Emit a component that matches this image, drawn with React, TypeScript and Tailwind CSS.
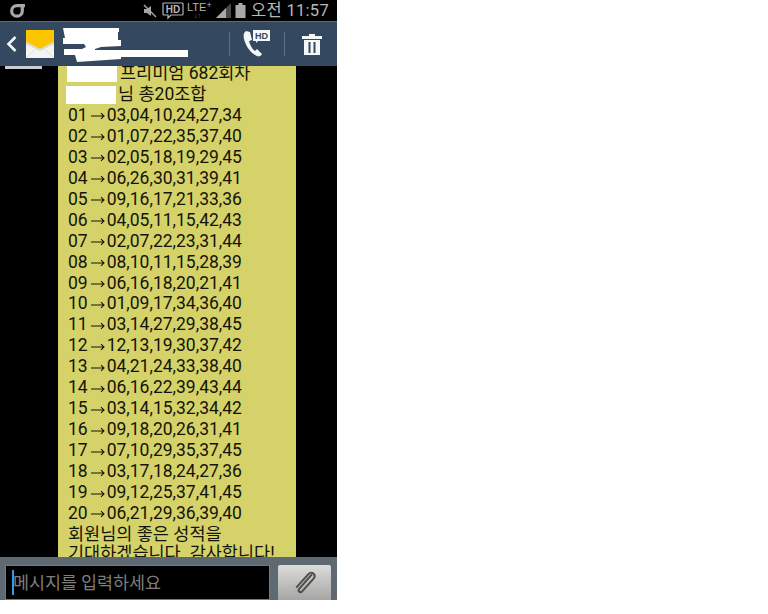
const rows = [
  ['01', '03,04,10,24,27,34'],
  ['02', '01,07,22,35,37,40'],
  ['03', '02,05,18,19,29,45'],
  ['04', '06,26,30,31,39,41'],
  ['05', '09,16,17,21,33,36'],
  ['06', '04,05,11,15,42,43'],
  ['07', '02,07,22,23,31,44'],
  ['08', '08,10,11,15,28,39'],
  ['09', '06,16,18,20,21,41'],
  ['10', '01,09,17,34,36,40'],
  ['11', '03,14,27,29,38,45'],
  ['12', '12,13,19,30,37,42'],
  ['13', '04,21,24,33,38,40'],
  ['14', '06,16,22,39,43,44'],
  ['15', '03,14,15,32,34,42'],
  ['16', '09,18,20,26,31,41'],
  ['17', '07,10,29,35,37,45'],
  ['18', '03,17,18,24,27,36'],
  ['19', '09,12,25,37,41,45'],
  ['20', '06,21,29,36,39,40'],
];

function Arrow() {
  return (
    <svg width="17" height="10" viewBox="0 0 17 10" className="mx-[1px] mt-[2px]">
      <path d="M2 5h13M12 2.2 15 5l-3 2.8" fill="none" stroke="#14140a" strokeWidth="1.1" />
    </svg>
  );
}

function StatusBar() {
  return (
    <div className="flex h-[21px] shrink-0 items-center bg-black pl-[9px] pr-[8px] text-[#b9b9b9]">
      {/* carrier logo */}
      <svg width="17" height="16" viewBox="0 0 16 15">
        <path d="M15 2.4H7.5a5 5 0 1 0 5 5V3" fill="none" stroke="#a9a9a9" strokeWidth="3" />
      </svg>
      <div className="ml-auto flex items-center">
        <svg width="14" height="14" viewBox="0 0 14 14">
          <path d="M1 5h3l4-3v10L4 9H1z" fill="#a6a6a6" />
          <path d="M1 1l12 12" stroke="#a6a6a6" strokeWidth="1.4" />
        </svg>
        <svg width="22" height="18" viewBox="0 0 22 18" className="ml-[5px]">
          <path d="M2 1h18a1 1 0 0 1 1 1v10a1 1 0 0 1-1 1H9l-3 3v-3H2a1 1 0 0 1-1-1V2a1 1 0 0 1 1-1z" fill="none" stroke="#b5b5b5" strokeWidth="1.2" />
          <text x="11" y="11" textAnchor="middle" fontSize="10" fontWeight="700" fontFamily="Liberation Sans" fill="#b5b5b5">HD</text>
        </svg>
        <div className="relative ml-[3px] h-[18px] w-[28px] font-['Liberation_Sans'] text-[11px] leading-[11px] text-[#b5b5b5]">
          LTE<span className="relative top-[-3px] text-[9px] leading-none">+</span>
          <div className="absolute left-[7px] top-[10px] text-[7px] leading-[8px] text-[#777]">↓↑</div>
        </div>
        <svg width="15" height="15" viewBox="0 0 15 15" className="ml-[1px]">
          <path d="M0 15 15 0v15z" fill="#4a4a4a" />
          <path d="M0 15 10 5v10z" fill="#a9a9a9" />
        </svg>
        <svg width="11" height="15" viewBox="0 0 11 15" className="ml-[4px]">
          <path d="M3.5 0h4v2h3v13H.5V2h3z" fill="#a9a9a9" />
        </svg>
        <span className="ml-[5px] font-['Roboto','Noto_Sans_CJK_KR',sans-serif] text-[16.5px] leading-[21px] tracking-[0.3px]">
          오전 11:57
        </span>
      </div>
    </div>
  );
}

function Header() {
  return (
    <div className="relative z-10 flex h-[45px] shrink-0 items-center border-t border-[#4f6b85] bg-[#34495f]">
      <svg width="13" height="20" viewBox="0 0 13 20" className="ml-[5px]">
        <path d="M10.5 3 3.5 10l7 7" fill="none" stroke="#f2f4f6" strokeWidth="2.6" />
      </svg>
      <svg width="28" height="28" viewBox="0 0 28 28" className="ml-[8px]">
        <rect x="0" y="0" width="28" height="28" fill="#f4f4f2" />
        <path d="M0 0h28v12L14 19 0 12z" fill="#fbc600" />
        <path d="M0 12 14 19l14-7v2L14 21 0 14z" fill="#d8d8d4" />
        <path d="M0 28 11 17M28 28 17 17" stroke="#dfdfdb" strokeWidth="1" />
      </svg>
      {/* redacted contact name */}
      <svg width="128" height="36" viewBox="0 0 128 36" className="ml-[7px] mt-[3px]">
        <path d="M2 0h56v4h-1v8h3v6l-20 1-6 2v1l93 0v7H60v2l-44 3-2-7H3v-6h18l4-2-2-3H2v-6h2z" fill="#ffffff" />
      </svg>
      <div className="ml-auto h-[24px] w-px bg-[#5d7286]" />
      <svg width="30" height="30" viewBox="0 0 30 30" className="ml-[12px] mr-[12px]">
        <path d="M4 2c-3 2-3 6-1 11 2 6 7 12 12 14 2 1 4 0 5-2l-5-5-2 2c-3-2-5-6-6-10l3-1-2-8z" fill="#f4f6f8" />
        <path d="M11 1h17v11h-12l-2 2v-2h-3z" fill="#f4f6f8" />
        <text x="19.5" y="10" textAnchor="middle" fontSize="9" fontWeight="700" fontFamily="Liberation Sans" fill="#34495f">HD</text>
      </svg>
      <div className="h-[24px] w-px bg-[#5d7286]" />
      <svg width="20" height="22" viewBox="0 0 20 22" className="ml-[17px] mr-[15px]">
        <path d="M0 3h7V1h6v2h7v3H0z" fill="#f4f6f8" />
        <path d="M2 7h16v15H2zM6.5 9v11h2V9zm5 0v11h2V9z" fill="#f4f6f8" fillRule="evenodd" />
      </svg>
    </div>
  );
}

function MessageBubble() {
  return (
    <div className="ml-[58px] mt-[-3px] h-[600px] w-[238px] bg-[#d4d268] pl-[10px] font-['Roboto','Noto_Sans_CJK_KR',sans-serif] text-[17.5px] leading-[20.95px] text-[#14140a]">
      <div className="relative pl-[52px]">
        프리미엄 682회차
        <div className="absolute left-[-1px] top-0 h-[19px] w-[50px] bg-white" />
      </div>
      <div className="relative pl-[50px]">
        님 총20조합
        <div className="absolute left-[-2px] top-[2px] h-[18px] w-[50px] bg-white" />
      </div>
      {rows.map(([num, picks]) => (
        <div key={num} className="flex items-center">
          <span>{num}</span>
          <Arrow />
          <span>{picks}</span>
        </div>
      ))}
      <div>회원님의 좋은 성적을</div>
      <div className="mt-[-2px]">기대하겠습니다. 감사합니다!</div>
    </div>
  );
}

function Composer() {
  return (
    <div className="flex h-[43px] shrink-0 items-start bg-[#5f6972] pl-[5px] pt-[8px]">
      <div className="flex h-[35px] w-[265px] items-center border border-[#2f8fc0] bg-black pl-[6px] font-['Noto_Sans_CJK_KR',sans-serif] text-[17.4px] text-[#7d7d7d]">
        <div className="mr-[-1px] h-[25px] w-[2px] bg-[#3f97d6]" />
        메시지를 입력하세요
      </div>
      <div className="ml-[8px] flex h-[36px] w-[53px] items-center justify-center rounded-[2px] bg-gradient-to-b from-[#dcdcda] to-[#a4a4a2]">
        <svg width="28" height="28" viewBox="0 0 24 24">
          <path d="M19 4.5 8 17c-1.5 1.8 1 4 2.6 2.2L20.5 8c2.5-3-1.8-6.8-4.4-3.8L5.5 16" fill="none" stroke="#4d4d4d" strokeWidth="1.7" transform="translate(-1 0)" />
        </svg>
      </div>
    </div>
  );
}

export default function App() {
  return (
    <div className="min-h-[614px] bg-white">
      <div className="flex h-[600px] w-[337px] flex-col overflow-hidden bg-black">
        <StatusBar />
        <Header />
        <div className="relative flex-1 overflow-hidden">
          <div className="absolute left-[5px] top-0 h-[3px] w-[37px] bg-[#c9ccd0]" />
          <MessageBubble />
        </div>
        <Composer />
      </div>
    </div>
  );
}
